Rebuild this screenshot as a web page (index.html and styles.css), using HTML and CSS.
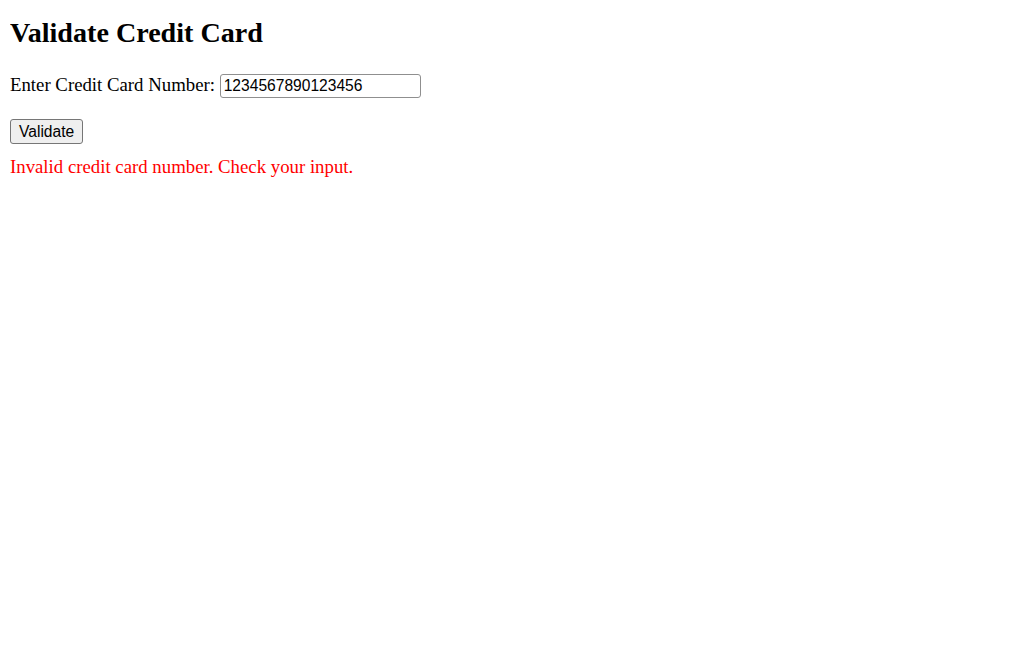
FILE: index.html
```html
<!DOCTYPE html>
<html lang="en">

<head>
    <meta charset="UTF-8">
    <title>Validate Credit Card</title>
    <link rel="stylesheet" href="styles.css">
</head>

<body>

    <h2>Validate Credit Card</h2>

    <div class="campo">
        <label for="card">Enter Credit Card Number:</label>
        <input type="text" id="card" value="1234567890123456">
    </div>

    <button class="btn-validar">Validate</button>

    <p id="mensagem" class="mensagem">Invalid credit card number. Check your input.</p>

</body>

</html>
```

FILE: styles.css
```css
body {
    font-family: "Liberation Serif", "Times New Roman", serif;
    font-size: 18.8px;
    margin: 0 10px;
    padding: 0;
    color: #000;
}

h2 {
    font-size: 28.1px;
    line-height: 32px;
    margin: 17px 0 0;
}

.campo {
    margin-top: 25px;
}

.campo input {
    font-family: "Liberation Sans", Arial, sans-serif;
    font-size: 15.6px;
    width: 201px;
    height: 24px;
    padding: 2px 3px;
    box-sizing: border-box;
    border: 1px solid #8f8f8f;
    border-radius: 3px;
    color: #000;
}

.btn-validar {
    display: block;
    margin-top: 21px;
    font-family: "Liberation Sans", Arial, sans-serif;
    font-size: 15.6px;
    height: 25px;
    padding: 0 8px;
    border: 1px solid #767676;
    border-radius: 3px;
    background: #efefef;
    color: #000;
}

.mensagem {
    color: red;
    margin: 12px 0 0;
}
```
